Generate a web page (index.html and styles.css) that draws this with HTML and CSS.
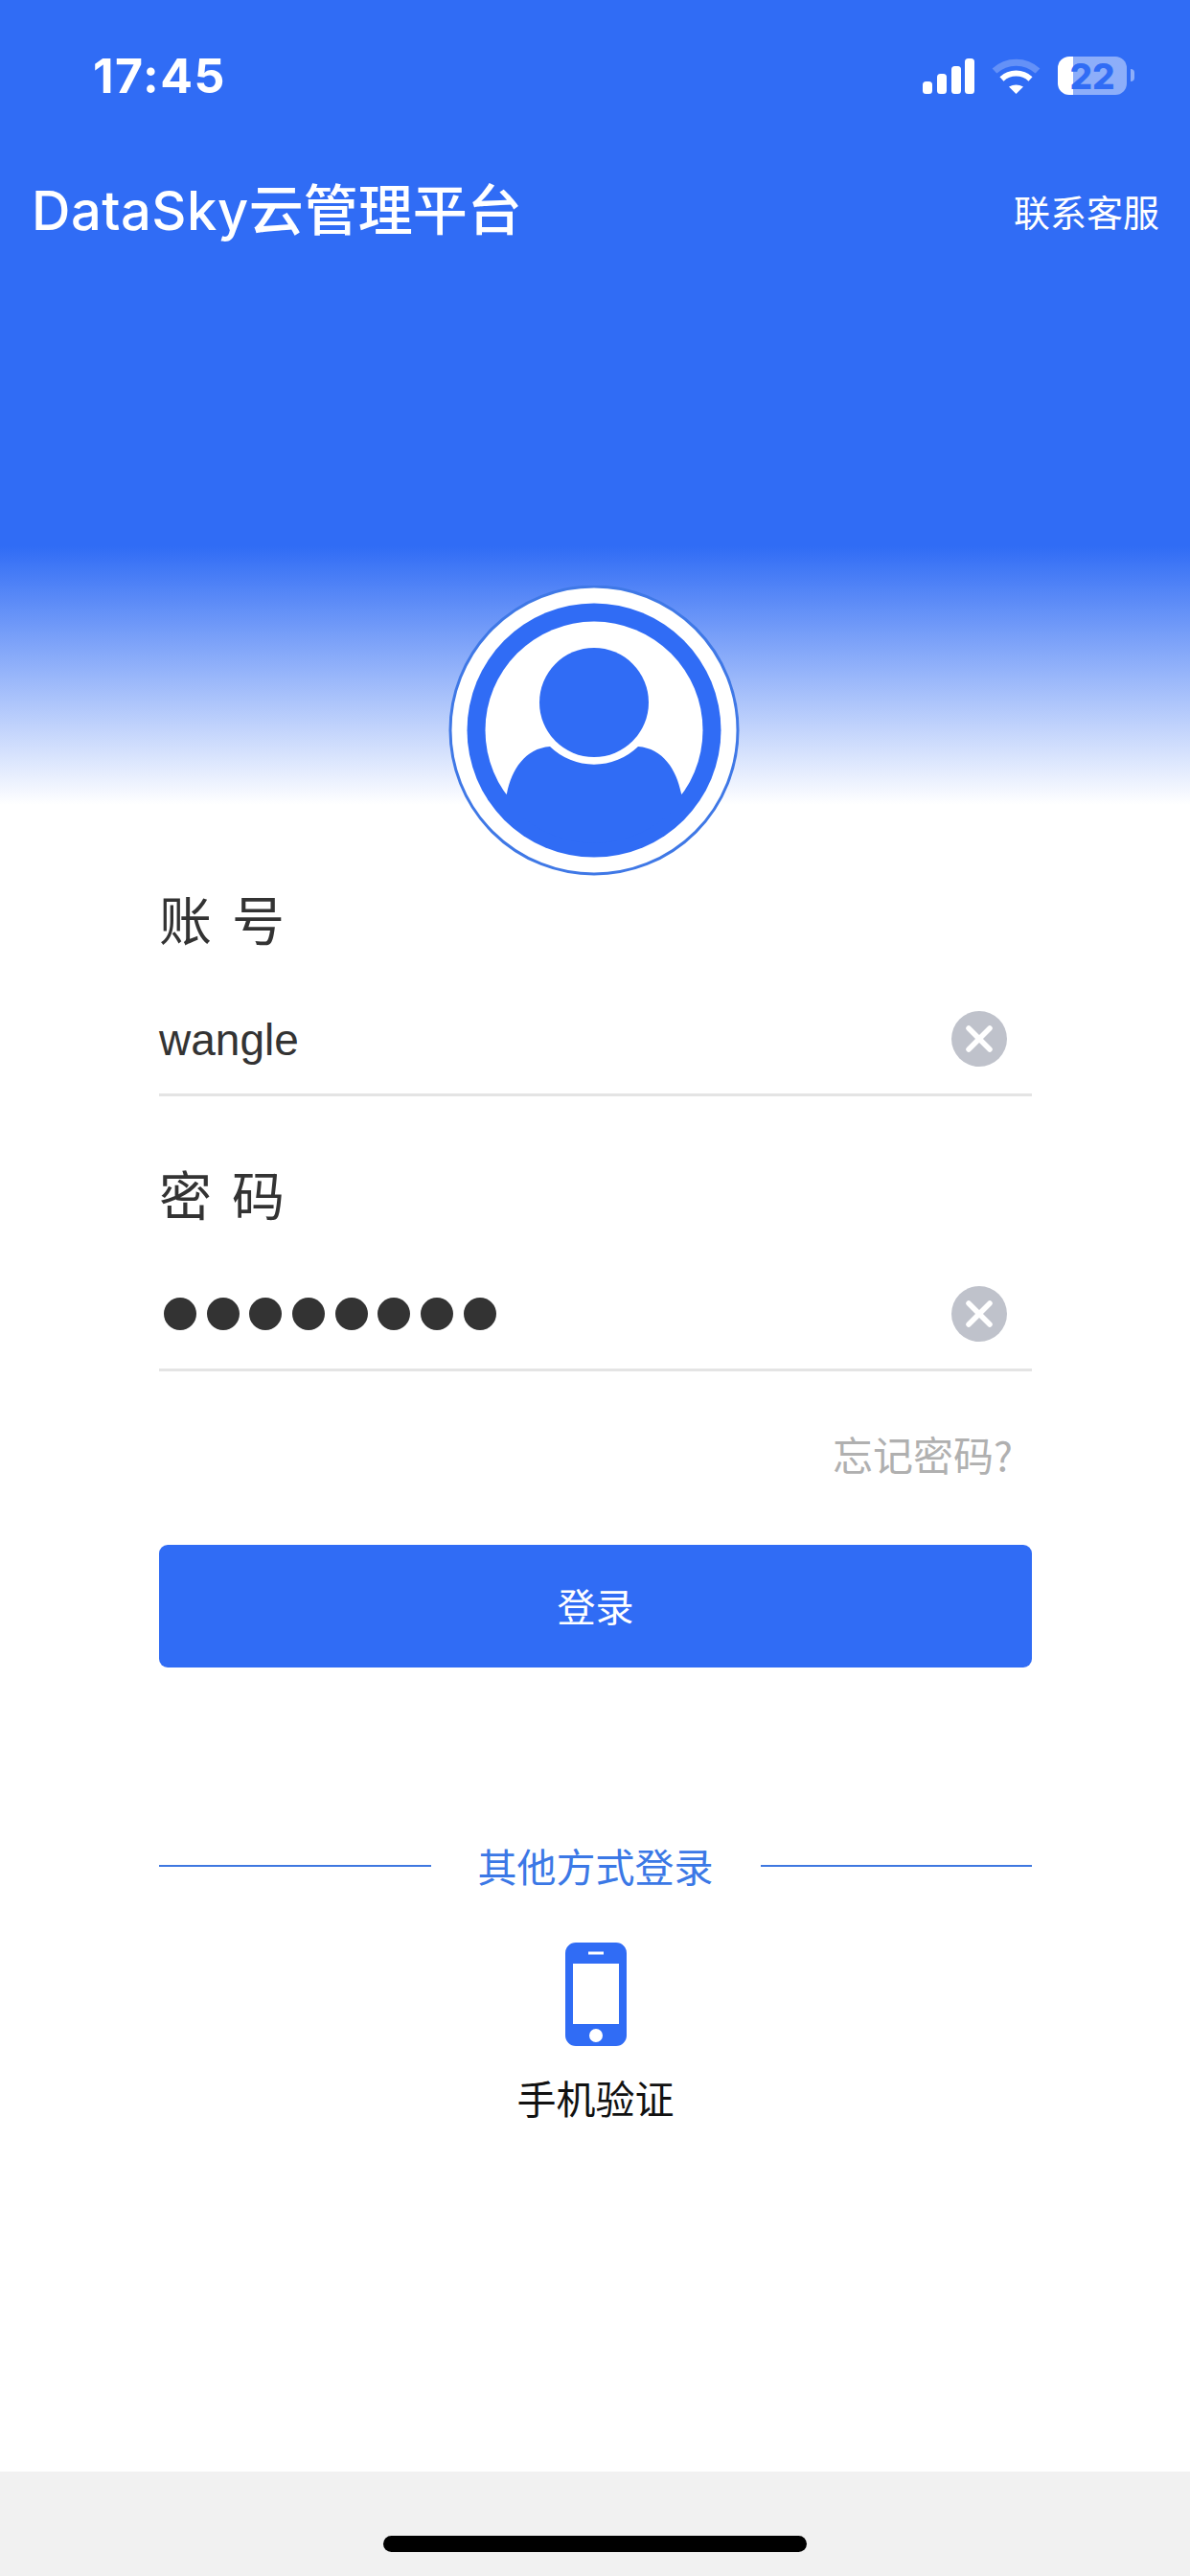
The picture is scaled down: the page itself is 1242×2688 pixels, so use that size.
FILE: index.html
```html
<!DOCTYPE html>
<html lang="zh-CN">
<head>
<meta charset="utf-8">
<title>DataSky云管理平台</title>
<link rel="stylesheet" href="styles.css">
</head>
<body>
<div class="page">
  <div class="status">
    <span class="time">17:45</span>
    <div class="status-icons">
      <svg class="signal" viewBox="0 0 54 37" width="54" height="37" aria-hidden="true">
        <rect x="0" y="24" width="10" height="13" rx="3.5"/>
        <rect x="15" y="16" width="10" height="21" rx="3.5"/>
        <rect x="30" y="8" width="10" height="29" rx="3.5"/>
        <rect x="44" y="0" width="10" height="37" rx="3.5"/>
      </svg>
      <svg class="wifi" viewBox="0 0 51 37" width="51" height="37" aria-hidden="true">
        <path class="wifi-dim" d="M3 13 A33 33 0 0 1 48 13"/>
        <path class="wifi-arc" d="M10.5 21.5 A22 22 0 0 1 40.5 21.5"/>
        <path class="wifi-dot" d="M18 29.5 Q25.5 25.5 33 29.5 L25.5 37 Z"/>
      </svg>
      <div class="battery"><span class="battery-level">22</span></div>
    </div>
  </div>

  <header class="header">
    <h1 class="title"><span class="latin">DataSky</span>云管理平台</h1>
    <a class="service">联系客服</a>
  </header>

  <div class="avatar-wrap">
    <svg class="avatar" viewBox="0 0 304 304" width="304" height="304" aria-hidden="true">
      <circle class="avatar-edge" cx="152" cy="151" r="150"/>
      <circle class="avatar-blue" cx="152" cy="151" r="132.5"/>
      <circle class="avatar-white" cx="152" cy="151" r="113.5"/>
      <path class="avatar-blue" d="M61 217 C66 192 80 170 106 168 A66 66 0 0 0 198 168 C224 170 238 192 243 217 L246 222 A118 118 0 0 1 58 222 Z"/>
      <circle class="avatar-blue" cx="152" cy="122" r="57"/>
    </svg>
  </div>

  <main class="form">
    <section class="field">
      <div class="label">账号</div>
      <div class="input-row">
        <span class="value">wangle</span>
        <svg class="clear" viewBox="0 0 58 58" width="58" height="58" aria-hidden="true">
          <circle cx="29" cy="29" r="29"/>
          <path d="M18 18 L40 40 M40 18 L18 40"/>
        </svg>
      </div>
    </section>
    <section class="field field-password">
      <div class="label">密码</div>
      <div class="input-row">
        <div class="dots">
          <span class="dot"></span><span class="dot"></span><span class="dot"></span><span class="dot"></span>
          <span class="dot"></span><span class="dot"></span><span class="dot"></span><span class="dot"></span>
        </div>
        <svg class="clear" viewBox="0 0 58 58" width="58" height="58" aria-hidden="true">
          <circle cx="29" cy="29" r="29"/>
          <path d="M18 18 L40 40 M40 18 L18 40"/>
        </svg>
      </div>
    </section>
    <div class="forgot-row"><a class="forgot">忘记密码?</a></div>
    <button class="login" type="button">登录</button>
    <div class="divider">
      <span class="divider-line"></span>
      <span class="divider-text">其他方式登录</span>
      <span class="divider-line"></span>
    </div>
    <div class="alt-login">
      <svg class="phone" viewBox="0 0 64 108" width="64" height="108" aria-hidden="true">
        <path class="phone-body" fill-rule="evenodd" d="M11 0 H53 A11 11 0 0 1 64 11 V97 A11 11 0 0 1 53 108 H11 A11 11 0 0 1 0 97 V11 A11 11 0 0 1 11 0 Z M8 22 V85 H56 V22 Z M32 90 A7 7 0 1 0 32 104 A7 7 0 1 0 32 90 Z M24 9.5 V12.5 H40 V9.5 Z"/>
      </svg>
      <span class="alt-label">手机验证</span>
    </div>
  </main>

  <footer class="home-area"><span class="home-bar"></span></footer>
</div>
</body>
</html>
```

FILE: styles.css
```css
* { box-sizing: border-box; }
html, body { margin: 0; padding: 0; }
body {
  font-family: "Noto Sans CJK SC", Inter, "Liberation Sans", sans-serif;
  color: #333;
  background: #fff;
}
.page {
  width: 1242px;
  height: 2688px;
  overflow: hidden;
  display: flex;
  flex-direction: column;
  background: linear-gradient(180deg, #306cf5 0, #306cf5 570px, #ffffff 840px);
}

/* status bar */
.status {
  height: 158px;
  flex: none;
  display: flex;
  align-items: center;
  justify-content: space-between;
  padding: 0 66px 0 97px;
  color: #fff;
}
.time {
  font-family: Inter, "Liberation Sans", sans-serif;
  font-size: 50px;
  font-weight: 700;
  letter-spacing: 1.5px;
  line-height: 1;
}
.status-icons { display: flex; align-items: center; }
.signal { fill: #fff; margin-right: 18px; }
.wifi { margin-right: 18px; }
.wifi-dim { fill: none; stroke: rgba(255,255,255,.25); stroke-width: 7; }
.wifi-arc { fill: none; stroke: #fff; stroke-width: 6; }
.wifi-dot { fill: #fff; }
.battery {
  position: relative;
  width: 72px;
  height: 40px;
  border-radius: 12px;
  background: linear-gradient(90deg, #fff 16px, rgba(255,255,255,.45) 16px);
  display: flex;
  align-items: center;
  justify-content: center;
}
.battery::after {
  content: "";
  position: absolute;
  right: -8px;
  top: 13px;
  width: 4px;
  height: 13px;
  border-radius: 0 4px 4px 0;
  background: rgba(255,255,255,.45);
}
.battery-level {
  font-family: Inter, "Liberation Sans", sans-serif;
  font-size: 37px;
  font-weight: 800;
  line-height: 1;
  color: #306cf5;
}

/* header */
.header {
  height: 124px;
  flex: none;
  display: flex;
  align-items: center;
  justify-content: space-between;
  padding: 0 32px 0 33px;
  color: #fff;
}
.title {
  margin: 0 0 5px;
  font-size: 57px;
  font-weight: 500;
  line-height: 76px;
}
.latin {
  font-family: Inter, "Liberation Sans", sans-serif;
  font-size: 56px;
  letter-spacing: .5px;
}
.service { font-size: 38px; line-height: 50px; }

/* avatar */
.avatar-wrap {
  flex: none;
  display: flex;
  justify-content: center;
  margin-top: 329px;
  height: 303px;
  padding-right: 2px;
}
.avatar { display: block; }
.avatar-edge { fill: #fff; stroke: #3f78e6; stroke-width: 3; }
.avatar-blue { fill: #306cf5; }
.avatar-white { fill: #fff; }

/* form */
.form {
  flex: 1;
  display: flex;
  flex-direction: column;
  padding: 0 165px 0 166px;
}
.label {
  height: 90px;
  font-size: 55px;
  line-height: 86px;
  letter-spacing: 21px;
  color: #333;
}
.input-row {
  height: 140px;
  padding-top: 23px;
  border-bottom: 3px solid #e4e4e4;
  display: flex;
  align-items: center;
  justify-content: space-between;
  padding-right: 26px;
}
.field-password { margin-top: 57px; }
.value {
  font-family: "Liberation Sans", Inter, sans-serif;
  font-size: 46px;
  line-height: 60px;
  padding-top: 2px;
  color: #333;
}
.clear { display: block; }
.clear circle { fill: #bfc2cb; }
.clear path { stroke: #fff; stroke-width: 5.5; stroke-linecap: round; fill: none; }
.dots { display: flex; gap: 10.7px; padding-left: 5px; }
.dot { width: 34px; height: 34px; border-radius: 50%; background: #333; }
.forgot-row {
  height: 181px;
  padding: 0 20px 9px 0;
  display: flex;
  align-items: center;
  justify-content: flex-end;
}
.forgot { font-size: 42px; line-height: 50px; color: #b0b0b0; }
.login {
  flex: none;
  height: 128px;
  width: 100%;
  border: 0;
  border-radius: 9px;
  background: #306cf5;
  color: #fff;
  font-family: inherit;
  font-size: 40px;
  padding: 0 0 2px;
}
.divider {
  flex: none;
  margin-top: 176px;
  height: 60px;
  display: flex;
  align-items: center;
  gap: 49px;
}
.divider-line { flex: 1; height: 2px; margin-top: 2px; background: #3f78e0; }
.divider-text { font-size: 41px; line-height: 60px; color: #3b78e6; }
.alt-login {
  flex: none;
  margin-top: 51px;
  display: flex;
  flex-direction: column;
  align-items: center;
  gap: 23px;
}
.phone { display: block; }
.phone-body { fill: #306cf5; }
.alt-label { font-size: 41px; line-height: 60px; color: #111; }

/* home indicator */
.home-area {
  flex: none;
  height: 109px;
  background: #f1f1f1;
  padding-top: 67px;
  display: flex;
  justify-content: center;
}
.home-bar {
  width: 442px;
  height: 17px;
  border-radius: 9px;
  background: #000;
}
```
